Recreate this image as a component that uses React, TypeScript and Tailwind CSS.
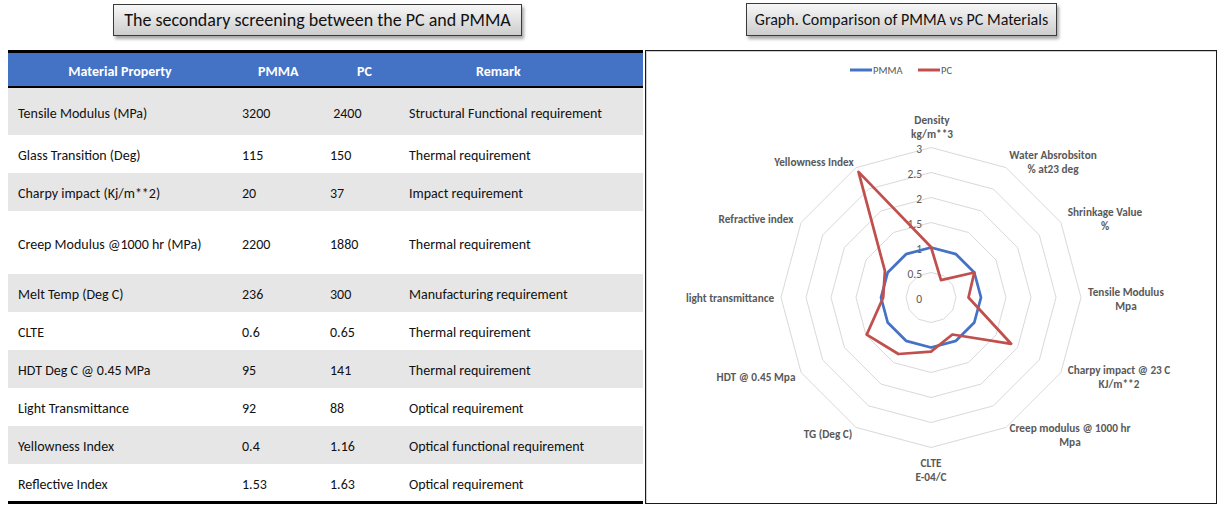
const rows = [
  { name: 'Tensile Modulus (MPa)', pmma: '3200', pc: ' 2400', remark: 'Structural Functional requirement', h: 'h-[47px]' },
  { name: 'Glass Transition (Deg)', pmma: '115', pc: '150', remark: 'Thermal requirement', h: 'h-[38px]' },
  { name: 'Charpy impact (Kj/m**2)', pmma: '20', pc: '37', remark: 'Impact requirement', h: 'h-[38px]' },
  { name: 'Creep Modulus @1000 hr (MPa)', pmma: '2200', pc: '1880', remark: 'Thermal requirement', h: 'h-[63px]' },
  { name: 'Melt Temp (Deg C)', pmma: '236', pc: '300', remark: 'Manufacturing requirement', h: 'h-[38px]' },
  { name: 'CLTE', pmma: '0.6', pc: '0.65', remark: 'Thermal requirement', h: 'h-[38px]' },
  { name: 'HDT Deg C @ 0.45 MPa', pmma: '95', pc: '141', remark: 'Thermal requirement', h: 'h-[38px]' },
  { name: 'Light Transmittance', pmma: '92', pc: '88', remark: 'Optical requirement', h: 'h-[38px]' },
  { name: 'Yellowness Index', pmma: '0.4', pc: '1.16', remark: 'Optical functional requirement', h: 'h-[38px]' },
  { name: 'Reflective Index', pmma: '1.53', pc: '1.63', remark: 'Optical requirement', h: 'h-[37px]' },
];

// radar categories, clockwise from top; label anchor in svg coords
const labels = [
  { lines: ['Density', 'kg/m**3'], x: 286, y: 69 },
  { lines: ['Water Absrobsiton', '% at23 deg'], x: 407, y: 104 },
  { lines: ['Shrinkage Value', '%'], x: 459, y: 161 },
  { lines: ['Tensile Modulus', 'Mpa'], x: 480, y: 241 },
  { lines: ['Charpy impact @ 23 C', 'KJ/m**2'], x: 473, y: 319 },
  { lines: ['Creep modulus @ 1000 hr', 'Mpa'], x: 424, y: 377 },
  { lines: ['CLTE', 'E-04/C'], x: 285, y: 412 },
  { lines: ['TG (Deg C)'], x: 182, y: 383 },
  { lines: ['HDT @ 0.45 Mpa'], x: 110, y: 326 },
  { lines: ['light transmittance'], x: 84, y: 247 },
  { lines: ['Refractive index'], x: 110, y: 168 },
  { lines: ['Yellowness Index'], x: 168, y: 111 },
];

const pmmaVals = [1, 1, 1, 1, 1, 1, 1, 1, 1, 1, 1, 1];
const pcVals = [1.01, 0.4, 1, 0.75, 1.85, 0.855, 1.083, 1.304, 1.484, 0.957, 1.065, 2.9];

const cx = 285;
const cy = 246.5;
const unit = 50;

const pt = (i: number, v: number) => {
  const a = (i * Math.PI) / 6;
  return `${(cx + v * unit * Math.sin(a)).toFixed(1)},${(cy - v * unit * Math.cos(a)).toFixed(1)}`;
};
const poly = (vals: number[]) => vals.map((v, i) => pt(i, v)).join(' ');

const RadarChart = () => (
  <svg width="569" height="452" viewBox="0 0 569 452">
    {/* legend */}
    <line x1="204" y1="19" x2="226" y2="19" stroke="#4472C4" strokeWidth="3" />
    <text x="227" y="19" fontSize="10.5" fill="#595959" dominantBaseline="central">PMMA</text>
    <line x1="272" y1="19" x2="294" y2="19" stroke="#C0504D" strokeWidth="3" />
    <text x="295" y="19" fontSize="10.5" fill="#595959" dominantBaseline="central">PC</text>

    {[0.5, 1, 1.5, 2, 2.5, 3].map((r) => (
      <polygon key={r} points={poly(Array(12).fill(r))} fill="none" stroke="#d9d9d9" strokeWidth="1" />
    ))}

    {[0, 0.5, 1, 1.5, 2, 2.5, 3].map((r) => (
      <text key={r} x="276" y={cy - r * unit + 1} fontSize="11.5" fill="#595959" textAnchor="end" dominantBaseline="central">
        {r}
      </text>
    ))}

    <polygon points={poly(pmmaVals)} fill="none" stroke="#4472C4" strokeWidth="2.75" strokeLinejoin="round" />
    <polygon points={poly(pcVals)} fill="none" stroke="#C0504D" strokeWidth="2.75" strokeLinejoin="round" />

    {labels.map((l, i) => (
      <text key={i} fontSize="11.25" fontWeight="bold" fill="#595959" textAnchor="middle" dominantBaseline="central">
        {l.lines.map((t, j) => (
          <tspan key={j} x={l.x} y={l.y + j * 13.5}>
            {t}
          </tspan>
        ))}
      </text>
    ))}
  </svg>
);

const TitleBox = ({ text, cls }: { text: string; cls: string }) => (
  <div
    className={`flex items-center justify-center whitespace-nowrap border border-[#3a3a3a] bg-gradient-to-b from-[#f7f7f7] to-[#cdcdcd] shadow-[2px_3px_3px_rgba(0,0,0,0.35)] text-[#111] ${cls}`}
  >
    {text}
  </div>
);

export default function App() {
  return (
    <div className="w-[1224px] h-[510px] bg-white flex [font-family:Carlito,Lato,'Liberation_Sans',sans-serif] overflow-hidden">
      {/* left: table */}
      <div className="w-[635px] ml-[8px] flex flex-col">
        <div className="h-[50px] pt-[4px]">
          <TitleBox text="The secondary screening between the PC and PMMA" cls="ml-[105px] w-[409px] h-[32px] text-[18px]" />
        </div>
        <div className="border-t-[3px] border-b-[3px] border-black">
          <div className="h-[35px] pt-[3px] bg-[#4472C4] border-b-2 border-black grid grid-cols-[224px_88px_79px_1fr] items-center text-white font-bold text-[14px]">
            <div className="text-center">Material Property</div>
            <div className="pl-[26px]">PMMA</div>
            <div className="pl-[37px]">PC</div>
            <div className="pl-[77px]">Remark</div>
          </div>
          {rows.map((r, i) => (
            <div
              key={i}
              className={`${r.h} pt-[3px] grid grid-cols-[224px_88px_79px_1fr] items-center text-[14px] text-[#111] ${i % 2 === 0 ? 'bg-[#E7E6E6]' : 'bg-white'}`}
            >
              <div className="pl-[10px]">{r.name}</div>
              <div className="pl-[10px]">{r.pmma}</div>
              <div className="pl-[10px] whitespace-pre">{r.pc}</div>
              <div className="pl-[10px]">{r.remark}</div>
            </div>
          ))}
        </div>
      </div>

      {/* right: chart */}
      <div className="w-[572px] ml-[2px] flex flex-col">
        <div className="h-[50px] pt-[3px]">
          <TitleBox text="Graph. Comparison of PMMA vs PC Materials" cls="ml-[101px] w-[311px] h-[33px] text-[16px]" />
        </div>
        <div className="h-[454px] border border-[#1a1a1a] shadow-[inset_1px_1px_0_#d0d0d0] bg-white">
          <RadarChart />
        </div>
      </div>
    </div>
  );
}
